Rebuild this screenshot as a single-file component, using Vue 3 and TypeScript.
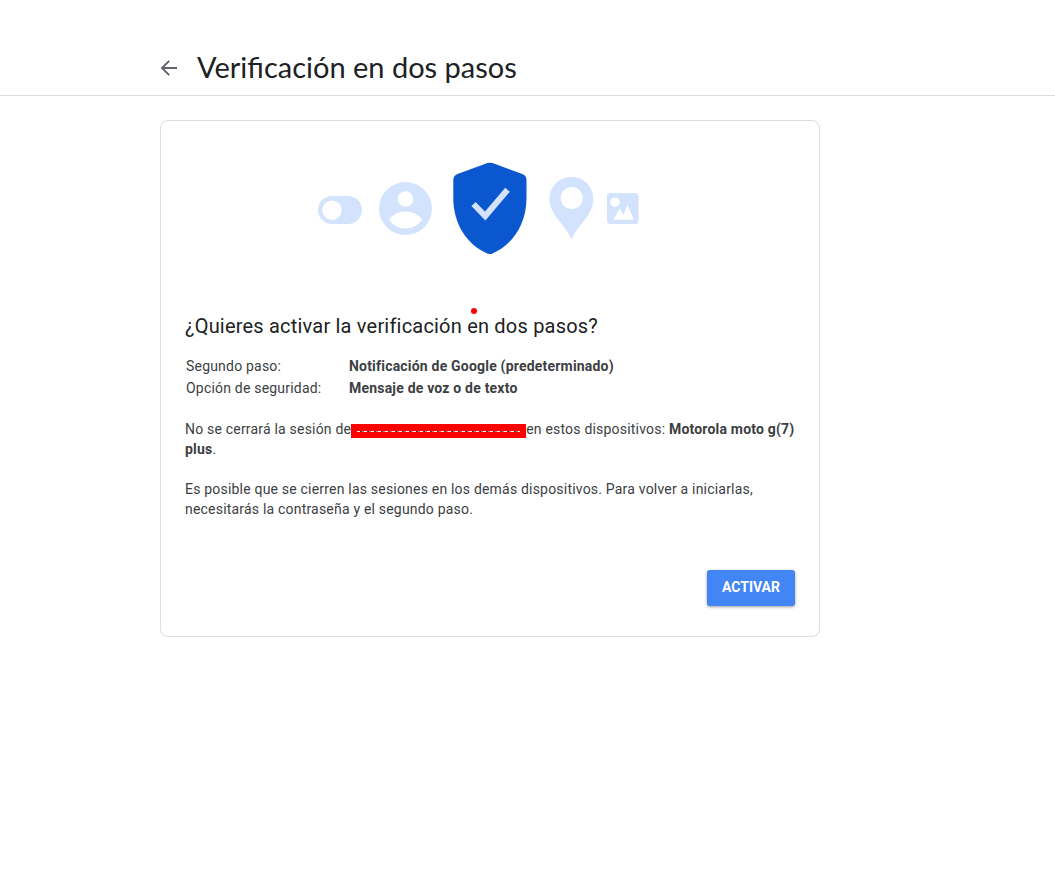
<script setup lang="ts">
interface Detail {
  label: string
  value: string
}

const details: Detail[] = [
  { label: 'Segundo paso:', value: 'Notificación de Google (predeterminado)' },
  { label: 'Opción de seguridad:', value: 'Mensaje de voz o de texto' },
]
</script>

<template>
  <div class="page">
    <header class="bar">
      <a class="back" href="#" aria-label="Atrás">
        <svg width="18" height="18" viewBox="0 0 18 18" aria-hidden="true">
          <path d="M17 9H2.5M9.2 1.8 2 9l7.2 7.2" fill="none" stroke="#5f6368" stroke-width="1.9" />
        </svg>
      </a>
      <h1>Verificación en dos pasos</h1>
    </header>

    <main class="card">
      <svg class="art" width="348" height="96" viewBox="316 160 348 96" aria-hidden="true">
        <g fill="#d3e3fd">
          <rect x="318" y="196" width="44" height="28" rx="14" />
          <circle cx="405.500" cy="208.500" r="26.500" />
          <path d="M571.500 177c-12.200 0-22 9.700-22 21.800 0 8 3.800 14.600 8.500 20.700 5.700 7.300 10 12.300 13.500 19.800 3.500-7.500 7.800-12.500 13.500-19.800 4.700-6.100 8.300-12.700 8.300-20.700 0-12.100-9.700-21.800-21.800-21.800z" />
          <rect x="607" y="193" width="31.500" height="31" rx="3" />
        </g>
        <g fill="#fff">
          <circle cx="332" cy="210.200" r="9.700" />
          <circle cx="405.500" cy="199" r="7.800" />
          <path d="M389 219.500Q395 211.500 405.500 211.500T422.300 219.500Q416 228.500 405.500 228.500T389 219.500z" />
          <circle cx="571.700" cy="198" r="11" />
          <circle cx="615" cy="202.200" r="4.800" />
          <path d="M613.500 219.700 619.700 208.300 623.500 214.700 627.500 205 634 219.700z" />
        </g>
        <path fill="#0b57d0" d="M487.500 163.100q2.500-.9 5 0L522.300 174q4.200 1.600 4.200 6v18c0 26-14 47-34 55.500q-2.500 1-5 0C467 245 453.300 224 453.300 198v-18q0-4.400 4.200-6z" />
        <path d="m473.500 204 11.700 12 22.300-26.300" fill="none" stroke="#d3e3fd" stroke-width="6" />
      </svg>

      <h2>¿Quieres activar la verificación <span class="marked">en</span> dos pasos?</h2>

      <dl>
        <template v-for="item in details" :key="item.label">
          <dt>{{ item.label }}</dt>
          <dd>{{ item.value }}</dd>
        </template>
      </dl>

      <p>
        No se cerrará la sesión de<span class="redacted" role="img" aria-label="Correo oculto"></span>en estos dispositivos: <b>Motorola moto g(7) plus</b>.
      </p>
      <p>
        Es posible que se cierren las sesiones en los demás dispositivos. Para volver a iniciarlas,
        necesitarás la contraseña y el segundo paso.
      </p>

      <div class="actions">
        <button type="button">ACTIVAR</button>
      </div>
    </main>
  </div>
</template>

<style>
body {
  margin: 0;
  background: #fff;
}
</style>

<style scoped>
.page {
  color: #3c4043;
  font-family: Roboto, "Liberation Sans", sans-serif;
  font-size: 14px;
  line-height: 20px;
  letter-spacing: 0.2px;
}

.bar {
  display: flex;
  align-items: center;
  gap: 19px;
  padding: 48px 24px 7px 160px;
  border-bottom: 1px solid #dadce0;
}

.back {
  display: flex;
}

h1 {
  margin: 0;
  padding-bottom: 2px;
  color: #202124;
  font-family: Lato, Roboto, sans-serif;
  font-size: 29px;
  font-weight: 400;
  line-height: 38px;
  letter-spacing: 0;
}

.card {
  box-sizing: border-box;
  max-width: 660px;
  margin: 24px 24px 24px 160px;
  padding: 39px 24px 30px;
  border: 1px solid #dadce0;
  border-radius: 8px;
}

.art {
  display: block;
  max-width: 100%;
  margin: 0 auto;
}

h2 {
  margin: 56px 0 16px;
  color: #202124;
  font-size: 20px;
  font-weight: 400;
  line-height: 28px;
}

.marked {
  position: relative;
}

.marked::before {
  content: "";
  position: absolute;
  top: -6px;
  left: 4px;
  width: 6px;
  height: 6px;
  border-radius: 50%;
  background: #f00;
}

dl {
  display: grid;
  grid-template-columns: 136px 1fr;
  column-gap: 27px;
  row-gap: 2px;
  margin: 0 0 21px;
  padding-left: 1px;
}

dd {
  margin: 0;
  font-weight: 700;
}

p {
  margin: 0 0 20px;
}

.redacted {
  display: inline-block;
  width: 175px;
  height: 14px;
  background:
    repeating-linear-gradient(90deg, #fff 0 3px, #3c4043 3px 5px, #f66 5px 7px) 6px 7px / 163px 1px no-repeat,
    #f00;
  vertical-align: -4px;
}

.actions {
  display: flex;
  justify-content: flex-end;
  margin-top: 51px;
}

button {
  height: 36px;
  padding: 0 15px 2px;
  border: 0;
  border-radius: 3px;
  background: #4285f4;
  box-shadow: 0 1px 3px rgba(0, 0, 0, 0.4);
  color: #fff;
  font: 700 14px/34px Roboto, sans-serif;
  cursor: pointer;
}
</style>
